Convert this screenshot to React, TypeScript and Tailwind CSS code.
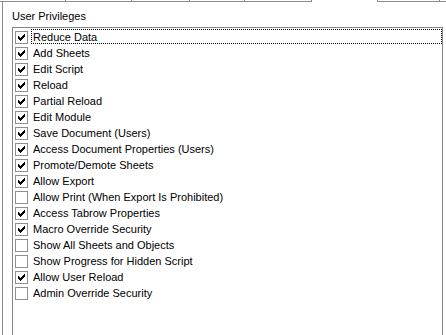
import React from "react";

const items: [string, boolean][] = [
  ["Reduce Data", true],
  ["Add Sheets", true],
  ["Edit Script", true],
  ["Reload", true],
  ["Partial Reload", true],
  ["Edit Module", true],
  ["Save Document (Users)", true],
  ["Access Document Properties (Users)", true],
  ["Promote/Demote Sheets", true],
  ["Allow Export", true],
  ["Allow Print (When Export Is Prohibited)", false],
  ["Access Tabrow Properties", true],
  ["Macro Override Security", true],
  ["Show All Sheets and Objects", false],
  ["Show Progress for Hidden Script", false],
  ["Allow User Reload", true],
  ["Admin Override Security", false],
];

function Check({ checked }: { checked: boolean }) {
  return (
    <div className="w-[13px] h-[13px] border border-[#8e8f8f] bg-white shrink-0">
      {checked && (
        <svg width="11" height="11" viewBox="0 0 11 11" shapeRendering="crispEdges">
          <g fill="#000">
            <rect x="2" y="4" width="1" height="3" />
            <rect x="3" y="5" width="1" height="3" />
            <rect x="4" y="6" width="1" height="3" />
            <rect x="5" y="5" width="1" height="3" />
            <rect x="6" y="4" width="1" height="3" />
            <rect x="7" y="3" width="1" height="3" />
            <rect x="8" y="2" width="1" height="3" />
          </g>
        </svg>
      )}
    </div>
  );
}

export default function App() {
  return (
    <div
      className="w-[446px] h-[335px] bg-white overflow-hidden flex flex-col text-[11px] text-black"
      style={{ fontFamily: '"Liberation Sans", Arial, sans-serif' }}
    >
      <div className="flex h-[2px] shrink-0">
        <div className="w-[66px] border-b border-r border-[#898c95]" />
        <div className="w-[66px] border-b border-r border-[#898c95]" />
        <div className="w-[58px] border-b border-r border-[#898c95]" />
        <div className="w-[55px] border-b border-r border-[#898c95]" />
        <div className="w-[66px] border-b border-[#898c95]" />
        <div className="w-[67px] border-l border-r border-[#898c95]" />
        <div className="w-[62px] border-b border-r border-[#898c95]" />
        <div className="flex-1 border-b border-[#898c95]" />
      </div>
      <div className="flex-1 ml-[2px] border-l border-[#898c95] pl-[9px] pt-[8px] flex flex-col">
        <div className="h-[13px] leading-[13px] mb-[4px]">User Privileges</div>
        <div className="w-[431px] h-[400px] border border-[#828790] pt-[1px] pr-0 flex flex-col shrink-0">
          {items.map(([label, checked], i) => (
            <div key={label} className="flex h-[16px] items-start">
              <div className="pl-[2px] pt-[2px] w-[18px] shrink-0">
                <Check checked={checked} />
              </div>
              <div
                className={
                  "flex-1 h-[15px] leading-[15px] pl-[1px] border " +
                  (i === 0 ? "border-dotted border-black" : "border-transparent")
                }
              >
                {label}
              </div>
            </div>
          ))}
        </div>
      </div>
    </div>
  );
}
